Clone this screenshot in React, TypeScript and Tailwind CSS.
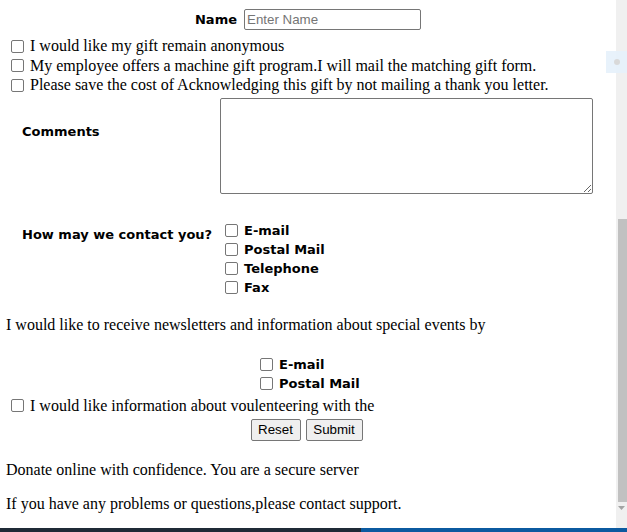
import React from "react";

const serif = "font-['Liberation_Serif',serif] text-[16px] text-black";
const label = "font-['DejaVu_Sans',sans-serif] text-[13px] font-bold text-black";
const control = "font-['Liberation_Sans',Arial,sans-serif] text-[13.33px]";

function Box() {
  return <span className="inline-block h-[13px] w-[13px] shrink-0 rounded-[2px] border border-[#767676] bg-white" />;
}

function SerifCheck({ text, h = "h-5" }: { text: string; h?: string }) {
  return (
    <div className={`flex items-center pl-[11px] ${h}`}>
      <Box />
      <span className={`ml-[6px] whitespace-nowrap ${serif}`}>{text}</span>
    </div>
  );
}

function LabelCheck({ text }: { text: string }) {
  return (
    <div className="flex h-[19px] items-center">
      <Box />
      <span className={`ml-[6px] whitespace-nowrap ${label}`}>{text}</span>
    </div>
  );
}

export default function App() {
  return (
    <div className="relative h-[532px] w-[627px] overflow-hidden bg-white">
      <div className="flex h-[528px]">
        <form className="w-[616px] shrink-0">
          <div className="flex h-[36px] items-start justify-center gap-[7px] pt-[9px]">
            <span className={`${label} leading-[21px]`}>Name</span>
            <input
              placeholder="Enter Name"
              className={`h-[21px] w-[177px] rounded-[2px] border border-[#767676] px-[2px] text-black placeholder:text-[#757575] ${control}`}
            />
          </div>

          <SerifCheck text="I would like my gift remain anonymous" />
          <SerifCheck text="My employee offers a machine gift program.I will mail the matching gift form." h="h-[19px]" />
          <SerifCheck text="Please save the cost of Acknowledging this gift by not mailing a thank you letter." />

          <div className="mt-[3px] flex">
            <div className="w-[220px] pl-[22px] pt-[20px]">
              <span className={label}>Comments</span>
            </div>
            <textarea className="h-[96px] w-[373px] resize-y rounded-[2px] border border-[#767676] bg-white" />
          </div>

          <div className="mt-[27px] flex">
            <div className="w-[225px] pl-[22px] pt-[4px] leading-[16px]">
              <span className={`${label} whitespace-nowrap`}>How may we contact you?</span>
            </div>
            <div className="flex flex-col">
              <LabelCheck text="E-mail" />
              <LabelCheck text="Postal Mail" />
              <LabelCheck text="Telephone" />
              <LabelCheck text="Fax" />
            </div>
          </div>

          <p className={`mt-[18px] pl-[6px] leading-[20px] ${serif}`}>
            I would like to receive newsletters and information about special events by
          </p>

          <div className="mt-[20px] flex flex-col pl-[260px]">
            <LabelCheck text="E-mail" />
            <LabelCheck text="Postal Mail" />
          </div>

          <SerifCheck text="I would like information about voulenteering with the" h="h-[25px]" />

          <div className="mt-[1px] flex justify-center gap-[5px] pr-[3px]">
            <button type="button" className={`h-[22px] w-[50px] rounded-[2px] border border-[#767676] bg-[#efefef] text-black ${control}`}>
              Reset
            </button>
            <button type="button" className={`h-[22px] w-[57px] rounded-[2px] border border-[#767676] bg-[#efefef] text-black ${control}`}>
              Submit
            </button>
          </div>

          <p className={`mt-[19px] pl-[6px] leading-[20px] ${serif}`}>Donate online with confidence. You are a secure server</p>
          <p className={`mt-[14px] pl-[6px] leading-[20px] ${serif}`}>If you have any problems or questions,please contact support.</p>
        </form>

        <div className="flex w-[11px] flex-col bg-[#f0f0f0]">
          <div className="h-[219px]" />
          <div className="ml-[2px] h-[283px] bg-[#c1c1c1]" />
          <div className="flex flex-1 items-start justify-center pt-[4px]">
            <svg width="7" height="4" viewBox="0 0 7 4">
              <path d="M0 0h7L3.5 4z" fill="#a3a3a3" />
            </svg>
          </div>
        </div>
      </div>

      <div className="flex h-[4px]">
        <div className="w-[361px] bg-[#1f2a36]" />
        <div className="flex-1 bg-[#0b5aa0]" />
      </div>

      <div className="absolute left-[606px] top-[51px] flex h-[22px] w-[21px] items-center justify-center bg-[#e6f1fb]/90">
        <span className="h-[6px] w-[6px] rounded-full bg-[#d9d9d9]" />
      </div>
    </div>
  );
}
